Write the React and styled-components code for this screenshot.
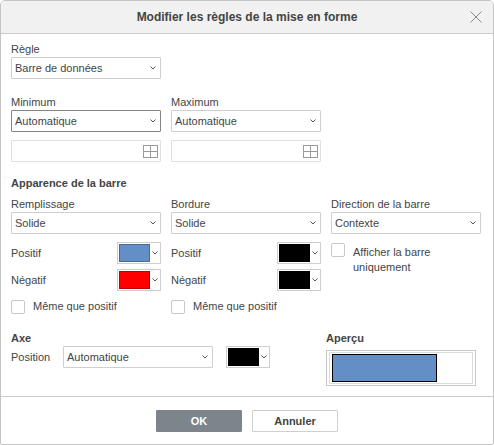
import React from "react";
import styled, { createGlobalStyle } from "styled-components";

const Global = createGlobalStyle`
  html, body { margin: 0; padding: 0; background: #fff; }
  body { font-family: "Liberation Sans", Arial, sans-serif; color: #444; }
  * { box-sizing: border-box; }
`;

const Dialog = styled.div`
  width: 494px;
  height: 445px;
  border: 1px solid #c4c4c4;
  border-radius: 5px 5px 2px 2px;
  display: flex;
  flex-direction: column;
  overflow: hidden;
  background: #fff;
`;

const Header = styled.div`
  height: 33px;
  flex: none;
  background: #f1f1f1;
  border-bottom: 1px solid #cbcbcb;
  display: grid;
  grid-template-columns: 1fr auto 1fr;
  align-items: center;
`;

const Title = styled.div`
  grid-column: 2;
  font-size: 12px;
  font-weight: 700;
  color: #444;
`;

const Close = styled.div`
  grid-column: 3;
  justify-self: end;
  margin-right: 11px;
  width: 12px;
  height: 12px;
  display: flex;
`;

const Body = styled.div`
  flex: 1;
  padding: 8px 10px 0 10px;
  display: flex;
  flex-direction: column;
`;

const Label = styled.div`
  font-size: 11px;
  line-height: 15px;
  height: 15px;
  color: #444;
  white-space: nowrap;
  margin-top: ${(p) => p.$mt || 0}px;
`;

const SectionTitle = styled.div`
  font-size: 11px;
  font-weight: 700;
  line-height: 15px;
  height: 15px;
  color: #444;
  margin-top: ${(p) => p.$mt || 0}px;
  margin-bottom: ${(p) => p.$mb || 0}px;
`;

const SelectBox = styled.div`
  width: 150px;
  height: 22px;
  border: 1px solid ${(p) => (p.$focus ? "#848484" : "#cfcfcf")};
  border-radius: 1px;
  display: flex;
  align-items: center;
  padding: 0 4px 0 3px;
  font-size: 11px;
  color: #444;
  background: #fff;
  margin-top: ${(p) => p.$mt || 0}px;
  flex: none;
`;

const SelectText = styled.span`
  flex: 1;
  white-space: nowrap;
`;

const TextBox = styled.div`
  width: 150px;
  height: 22px;
  border: 1px solid #e1e1e1;
  border-radius: 1px;
  display: flex;
  align-items: center;
  justify-content: flex-end;
  padding-right: 2px;
  margin-top: ${(p) => p.$mt || 0}px;
`;

const Pair = styled.div`
  display: grid;
  grid-template-columns: 150px 150px;
  column-gap: 10px;
`;

const Col = styled.div`
  display: flex;
  flex-direction: column;
`;

const Triple = styled.div`
  display: grid;
  grid-template-columns: 150px 150px 150px;
  column-gap: 10px;
`;

const ColorRow = styled.div`
  height: 22px;
  display: flex;
  align-items: center;
  justify-content: space-between;
  margin-top: ${(p) => p.$mt || 0}px;
  font-size: 11px;
  color: #444;
`;

const ColorButton = styled.div`
  width: 44px;
  height: 22px;
  border: 1px solid #cfcfcf;
  padding: 1px;
  display: flex;
  align-items: center;
  background: #fff;
  flex: none;
`;

const Swatch = styled.div`
  width: 31px;
  height: 18px;
  background: ${(p) => p.$color};
  border: 1px solid ${(p) => (p.$color === "#000" ? "#000" : "rgba(0,0,0,0.25)")};
  flex: none;
`;

const ChevWrap = styled.div`
  flex: 1;
  display: flex;
  justify-content: center;
  align-items: center;
`;

const CheckRow = styled.label`
  display: flex;
  align-items: ${(p) => (p.$top ? "flex-start" : "center")};
  gap: 8px;
  margin-top: ${(p) => p.$mt || 0}px;
  font-size: 11px;
  line-height: 15px;
  color: #444;
`;

const Box = styled.span`
  width: 14px;
  height: 14px;
  border: 1px solid #c8c8c8;
  border-radius: 2px;
  background: #fff;
  flex: none;
`;

const CheckText = styled.span`
  padding-top: ${(p) => p.$pt || 0}px;
`;

const Bottom = styled.div`
  display: grid;
  grid-template-columns: 315px 150px;
  margin-top: 17px;
`;

const AxisRow = styled.div`
  display: flex;
  align-items: center;
  height: 22px;
`;

const AxisLabel = styled.div`
  width: 52px;
  font-size: 11px;
  color: #444;
`;

const Preview = styled.div`
  margin-top: 4px;
  width: 150px;
  height: 36px;
  border: 1px solid #c8c8c8;
  padding: 1px 2px;
`;

const PreviewInner = styled.div`
  height: 100%;
  border: 1px solid #dcdcdc;
  padding: 1px 2px;
`;

const Bar = styled.div`
  width: 105px;
  height: 100%;
  background: #638ec6;
  border: 1px solid #000;
`;

const Footer = styled.div`
  height: 48px;
  flex: none;
  border-top: 1px solid #cbcbcb;
  display: flex;
  justify-content: center;
  align-items: center;
  gap: 10px;
  padding-top: 1px;
`;

const Button = styled.div`
  width: 86px;
  height: 22px;
  display: flex;
  align-items: center;
  justify-content: center;
  font-size: 11px;
  font-weight: 700;
  border: 1px solid ${(p) => (p.$primary ? "#7d858c" : "#cfcfcf")};
  background: ${(p) => (p.$primary ? "#7d858c" : "#fff")};
  color: ${(p) => (p.$primary ? "#fff" : "#444")};
  border-radius: 1px;
`;

const Chevron = () => (
  <svg width="6" height="4" viewBox="0 0 6 4" style={{ flex: "none" }}>
    <path d="M0.5 0.5 L3 3 L5.5 0.5" fill="none" stroke="#555" strokeWidth="1" />
  </svg>
);

const Select = ({ children, focus, mt }) => (
  <SelectBox $focus={focus} $mt={mt}>
    <SelectText>{children}</SelectText>
    <Chevron />
  </SelectBox>
);

const RangeInput = ({ mt }) => (
  <TextBox $mt={mt}>
    <svg width="15" height="13" viewBox="0 0 15 13">
      <rect x="0.5" y="0.5" width="14" height="12" fill="none" stroke="#9a9a9a" />
      <path d="M7.5 0.5 V12.5 M0.5 6.5 H14.5" stroke="#9a9a9a" />
    </svg>
  </TextBox>
);

const ColorPick = ({ color }) => (
  <ColorButton>
    <Swatch $color={color} />
    <ChevWrap>
      <Chevron />
    </ChevWrap>
  </ColorButton>
);

const Check = ({ children, mt, top, pt }) => (
  <CheckRow $mt={mt} $top={top}>
    <Box />
    <CheckText $pt={pt}>{children}</CheckText>
  </CheckRow>
);

export default function App() {
  return (
    <>
      <Global />
      <Dialog>
        <Header>
          <Title>Modifier les règles de la mise en forme</Title>
          <Close>
            <svg width="12" height="12" viewBox="0 0 12 12">
              <path d="M0.5 0.5 L11.5 11.5 M11.5 0.5 L0.5 11.5" stroke="#8a8a8a" strokeWidth="1" />
            </svg>
          </Close>
        </Header>
        <Body>
          <Label>Règle</Label>
          <Select>Barre de données</Select>

          <Pair style={{ marginTop: 16 }}>
            <Col>
              <Label>Minimum</Label>
              <Select focus>Automatique</Select>
              <RangeInput mt={8} />
            </Col>
            <Col>
              <Label>Maximum</Label>
              <Select>Automatique</Select>
              <RangeInput mt={8} />
            </Col>
          </Pair>

          <SectionTitle $mt={14} $mb={6}>Apparence de la barre</SectionTitle>
          <Triple>
            <Col>
              <Label>Remplissage</Label>
              <Select>Solide</Select>
              <ColorRow $mt={8}>
                Positif
                <ColorPick color="#638ec6" />
              </ColorRow>
              <ColorRow $mt={5}>
                Négatif
                <ColorPick color="#ff0000" />
              </ColorRow>
              <Check mt={8}>Même que positif</Check>
            </Col>
            <Col>
              <Label>Bordure</Label>
              <Select>Solide</Select>
              <ColorRow $mt={8}>
                Positif
                <ColorPick color="#000" />
              </ColorRow>
              <ColorRow $mt={5}>
                Négatif
                <ColorPick color="#000" />
              </ColorRow>
              <Check mt={8}>Même que positif</Check>
            </Col>
            <Col>
              <Label>Direction de la barre</Label>
              <Select>Contexte</Select>
              <Check mt={9} top pt={2}>
                Afficher la barre uniquement
              </Check>
            </Col>
          </Triple>

          <Bottom>
            <Col>
              <SectionTitle>Axe</SectionTitle>
              <AxisRow>
                <AxisLabel>Position</AxisLabel>
                <Select>Automatique</Select>
                <div style={{ width: 13 }} />
                <ColorPick color="#000" />
              </AxisRow>
            </Col>
            <Col>
              <SectionTitle>Aperçu</SectionTitle>
              <Preview>
                <PreviewInner>
                  <Bar />
                </PreviewInner>
              </Preview>
            </Col>
          </Bottom>
        </Body>
        <Footer>
          <Button $primary>OK</Button>
          <Button>Annuler</Button>
        </Footer>
      </Dialog>
    </>
  );
}
